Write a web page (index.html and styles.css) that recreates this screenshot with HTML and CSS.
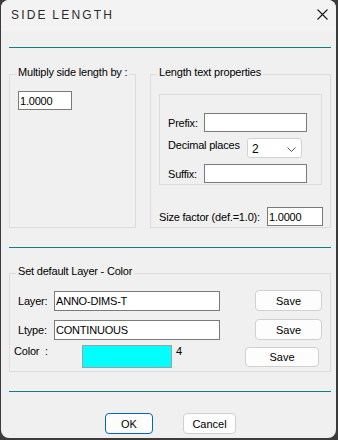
FILE: index.html
```html
<!DOCTYPE html>
<html lang="en">

<head>
    <meta charset="UTF-8">
    <meta name="viewport" content="width=device-width, initial-scale=1.0">
    <title>Side length</title>
    <link rel="stylesheet" href="styles.css">
</head>

<body>
    <div class="window">
        <div class="titlebar">
            <span class="title">SIDE LENGTH</span>
            <svg class="close" width="11" height="11" viewBox="0 0 11 11">
                <path d="M0.5 0.5 L10.5 10.5 M10.5 0.5 L0.5 10.5" stroke="#1a1a1a" stroke-width="1.1" fill="none" />
            </svg>
        </div>

        <div class="content">
            <div class="rule first"></div>

            <div class="groups">
                <fieldset class="group multiply">
                    <legend>Multiply side length by :</legend>
                    <input type="text" class="field f-mult" value="1.0000">
                </fieldset>

                <fieldset class="group props">
                    <legend>Length text properties</legend>
                    <div class="inner">
                        <div class="line">
                            <label class="lbl">Prefix:</label>
                            <input type="text" class="field f-wide">
                        </div>
                        <div class="line decimals">
                            <label class="lbl">Decimal places</label>
                            <div class="combo">
                                <span>2</span>
                                <svg width="9" height="5" viewBox="0 0 9 5">
                                    <path d="M0.5 0.5 L4.5 4.5 L8.5 0.5" stroke="#555" fill="none" />
                                </svg>
                            </div>
                        </div>
                        <div class="line">
                            <label class="lbl">Suffix:</label>
                            <input type="text" class="field f-wide">
                        </div>
                    </div>
                    <div class="line size">
                        <label>Size factor (def.=1.0):</label>
                        <input type="text" class="field f-size" value="1.0000">
                    </div>
                </fieldset>
            </div>

            <div class="rule second"></div>

            <fieldset class="group layer">
                <legend>Set default Layer - Color</legend>
                <div class="lrow">
                    <label class="lname">Layer:</label>
                    <input type="text" class="field f-layer" value="ANNO-DIMS-T">
                    <button class="btn save">Save</button>
                </div>
                <div class="lrow">
                    <label class="lname">Ltype:</label>
                    <input type="text" class="field f-layer" value="CONTINUOUS">
                    <button class="btn save">Save</button>
                </div>
                <div class="lrow colorrow">
                    <label class="lname cname">Color &nbsp;:</label>
                    <div class="swatch"></div>
                    <span class="cnum">4</span>
                    <button class="btn save save-c">Save</button>
                </div>
            </fieldset>

            <div class="rule third"></div>

            <div class="actions">
                <button class="btn ok">OK</button>
                <button class="btn cancel">Cancel</button>
            </div>
        </div>
    </div>
</body>

</html>
```

FILE: styles.css
```css
* {
    margin: 0;
    padding: 0;
    box-sizing: border-box;
}

body {
    background: #3b3b3b;
    font-family: "Liberation Sans", Arial, sans-serif;
    font-size: 11px;
    color: #000;
    width: 338px;
    height: 440px;
    overflow: hidden;
}

.window {
    margin-left: 1px;
    width: 335px;
    height: 438px;
    border-radius: 8px;
    background: #f0f0f0;
    overflow: hidden;
    display: flex;
    flex-direction: column;
}

.titlebar {
    height: 31px;
    background: #f3f3f3;
    display: flex;
    align-items: center;
    justify-content: space-between;
    padding: 0 8px 2px 10px;
}

.title {
    font-size: 12px;
    letter-spacing: 2.2px;
    word-spacing: -1px;
    color: #2b2b2b;
}

.content {
    padding: 0 5px 0 8px;
}

.rule {
    height: 1px;
    background: #0f817c;
}

.first {
    margin-top: 16px;
}

.second {
    margin-top: 19px;
}

.third {
    margin-top: 19px;
}

.group {
    border: 1px solid #dcdcdc;
    min-width: 0;
}

.group legend {
    margin-left: -2px;
    padding: 0 2px 3px 2px;
    line-height: 13px;
    letter-spacing: -0.2px;
    white-space: nowrap;
}

.groups {
    display: flex;
    gap: 14px;
    margin-top: 18px;
}

.multiply {
    width: 127px;
    padding: 9px 8px 0 8px;
}

.props {
    width: 181px;
    padding: 12px 8px 1px 8px;
}

.field {
    font-family: "Liberation Sans", Arial, sans-serif;
    font-size: 11px;
    letter-spacing: -0.2px;
    height: 19px;
    border: 1px solid #7a7a7a;
    background: #fff;
    padding: 0 1px;
    color: #000;
    outline: none;
}

.f-mult {
    width: 54px;
}

.inner {
    border: 1px solid #dcdcdc;
    padding: 18px 8px 1px 8px;
}

.line {
    display: flex;
    align-items: center;
}

.lbl {
    width: 36px;
    letter-spacing: -0.2px;
}

.f-wide {
    width: 103px;
}

.decimals {
    margin: 6px 0;
    align-items: flex-start;
}

.decimals .lbl {
    width: 79px;
    margin-top: 1px;
}

.combo {
    width: 55px;
    height: 20px;
    background: #fff;
    border: 1px solid #d2d2d2;
    border-radius: 3px;
    display: flex;
    align-items: center;
    justify-content: space-between;
    padding: 2px 5px 0 4px;
    font-size: 12px;
}

.size {
    margin-top: 22px;
    letter-spacing: -0.2px;
}

.f-size {
    width: 56px;
    margin-left: auto;
    margin-right: -1px;
}

.layer {
    margin-top: 17px;
    width: 322px;
    padding: 9px 8px 3px 8px;
}

.lrow {
    display: flex;
    align-items: center;
    height: 21px;
    margin-bottom: 8px;
}

.lname {
    width: 36px;
    letter-spacing: -0.2px;
}

.f-layer {
    width: 166px;
    height: 20px;
    margin-right: 35px;
}

.btn {
    font-family: "Liberation Sans", Arial, sans-serif;
    font-size: 11px;
    height: 21px;
    background: #fdfdfd;
    border: 1px solid #d0d0d0;
    border-radius: 4px;
    color: #000;
}

.save {
    width: 67px;
}

.colorrow {
    height: 23px;
    margin-top: -3px;
    margin-bottom: 0;
    align-items: flex-start;
}

.cname {
    width: 68px;
    margin-left: -4px;
    margin-top: 0;
}

.swatch {
    width: 90px;
    height: 23px;
    background: #00ffff;
    border: 1px solid #a0a0a0;
}

.cnum {
    margin-left: 4px;
    width: 69px;
}

.save-c {
    width: 74px;
    height: 20px;
    margin-top: 2px;
}

.actions {
    display: flex;
    gap: 30px;
    margin-top: 21px;
    padding-left: 96px;
}

.ok {
    width: 48px;
    border-color: #0067c0;
}

.cancel {
    width: 53px;
}
```
